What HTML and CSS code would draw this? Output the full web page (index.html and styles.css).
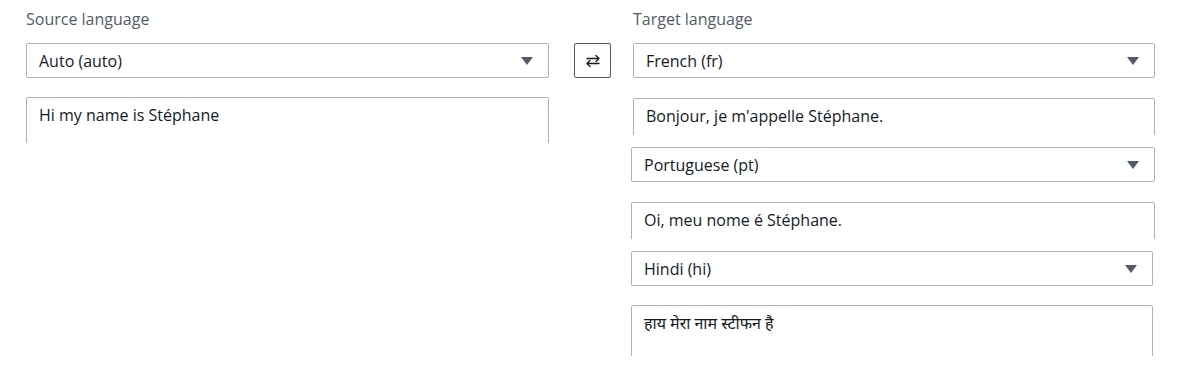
FILE: index.html
```html
<!DOCTYPE html>
<html lang="en">
<head>
  <meta charset="UTF-8">
  <title>Translate</title>
  <link rel="stylesheet" href="styles.css">
</head>
<body>
  <div class="translator">
    <div class="column source">
      <div class="label">Source language</div>
      <div class="select">
        <span>Auto (auto)</span>
        <span class="caret"></span>
      </div>
      <div class="clip clip-source">
        <div class="text-box">Hi my name is Stéphane</div>
      </div>
    </div>

    <div class="swap-col">
      <button class="swap" title="Swap languages">
        <svg width="16" height="16" viewBox="0 0 16 16" fill="none" stroke="#16191f" stroke-width="1.3" stroke-linecap="round" stroke-linejoin="round">
          <path d="M2 5.5h12M11 2.5l3 3-3 3"/>
          <path d="M14 10.5H2M5 7.5l-3 3 3 3"/>
        </svg>
      </button>
    </div>

    <div class="column target">
      <div class="label">Target language</div>
      <div class="output first">
        <div class="select">
          <span>French (fr)</span>
          <span class="caret"></span>
        </div>
        <div class="clip">
          <div class="text-box">Bonjour, je m'appelle Stéphane.</div>
        </div>
      </div>
      <div class="output shifted">
        <div class="select">
          <span>Portuguese (pt)</span>
          <span class="caret"></span>
        </div>
        <div class="clip">
          <div class="text-box">Oi, meu nome é Stéphane.</div>
        </div>
      </div>
      <div class="output shifted narrow">
        <div class="select">
          <span>Hindi (hi)</span>
          <span class="caret"></span>
        </div>
        <div class="clip clip-tall">
          <div class="text-box" lang="hi">हाय मेरा नाम स्टीफन है</div>
        </div>
      </div>
    </div>
  </div>
</body>
</html>
```
FILE: styles.css
```css
body {
  margin: 0;
  background: #ffffff;
  font-family: 'Open Sans', 'Noto Sans', 'Noto Sans Devanagari', sans-serif;
  font-size: 16px;
  color: #16191f;
}
.translator {
  display: flex;
  align-items: flex-start;
  padding: 8px 0 0 26px;
}
.column {
  display: flex;
  flex-direction: column;
}
.source {
  width: 523px;
}
.target {
  width: 522px;
}
.label {
  color: #545b64;
  line-height: 22px;
  margin-bottom: 13px;
}
.swap-col {
  padding: 35px 22px 0 25px;
}
.swap {
  width: 37px;
  height: 35px;
  padding: 0;
  border: 1px solid #545b64;
  border-radius: 2px;
  background: #ffffff;
  display: flex;
  align-items: center;
  justify-content: center;
}
.select {
  height: 35px;
  box-sizing: border-box;
  border: 1px solid #aab7b8;
  border-radius: 2px;
  padding: 0 15px 0 12px;
  display: flex;
  align-items: center;
  justify-content: space-between;
}
.caret {
  width: 0;
  height: 0;
  border-left: 6px solid transparent;
  border-right: 6px solid transparent;
  border-top: 8px solid #545b64;
}
.clip {
  margin-top: 20px;
  height: 37px;
  overflow: hidden;
}
.clip-source {
  margin-top: 19px;
  height: 46px;
}
.clip-tall {
  margin-top: 19px;
  height: 51px;
}
.text-box {
  height: 90px;
  box-sizing: border-box;
  border: 1px solid #aab7b8;
  border-radius: 2px;
  padding: 6px 12px;
  line-height: 22px;
}
.output + .output {
  margin-top: 12px;
}
.shifted {
  margin-left: -2px;
}
.narrow {
  margin-right: 2px;
}
```
